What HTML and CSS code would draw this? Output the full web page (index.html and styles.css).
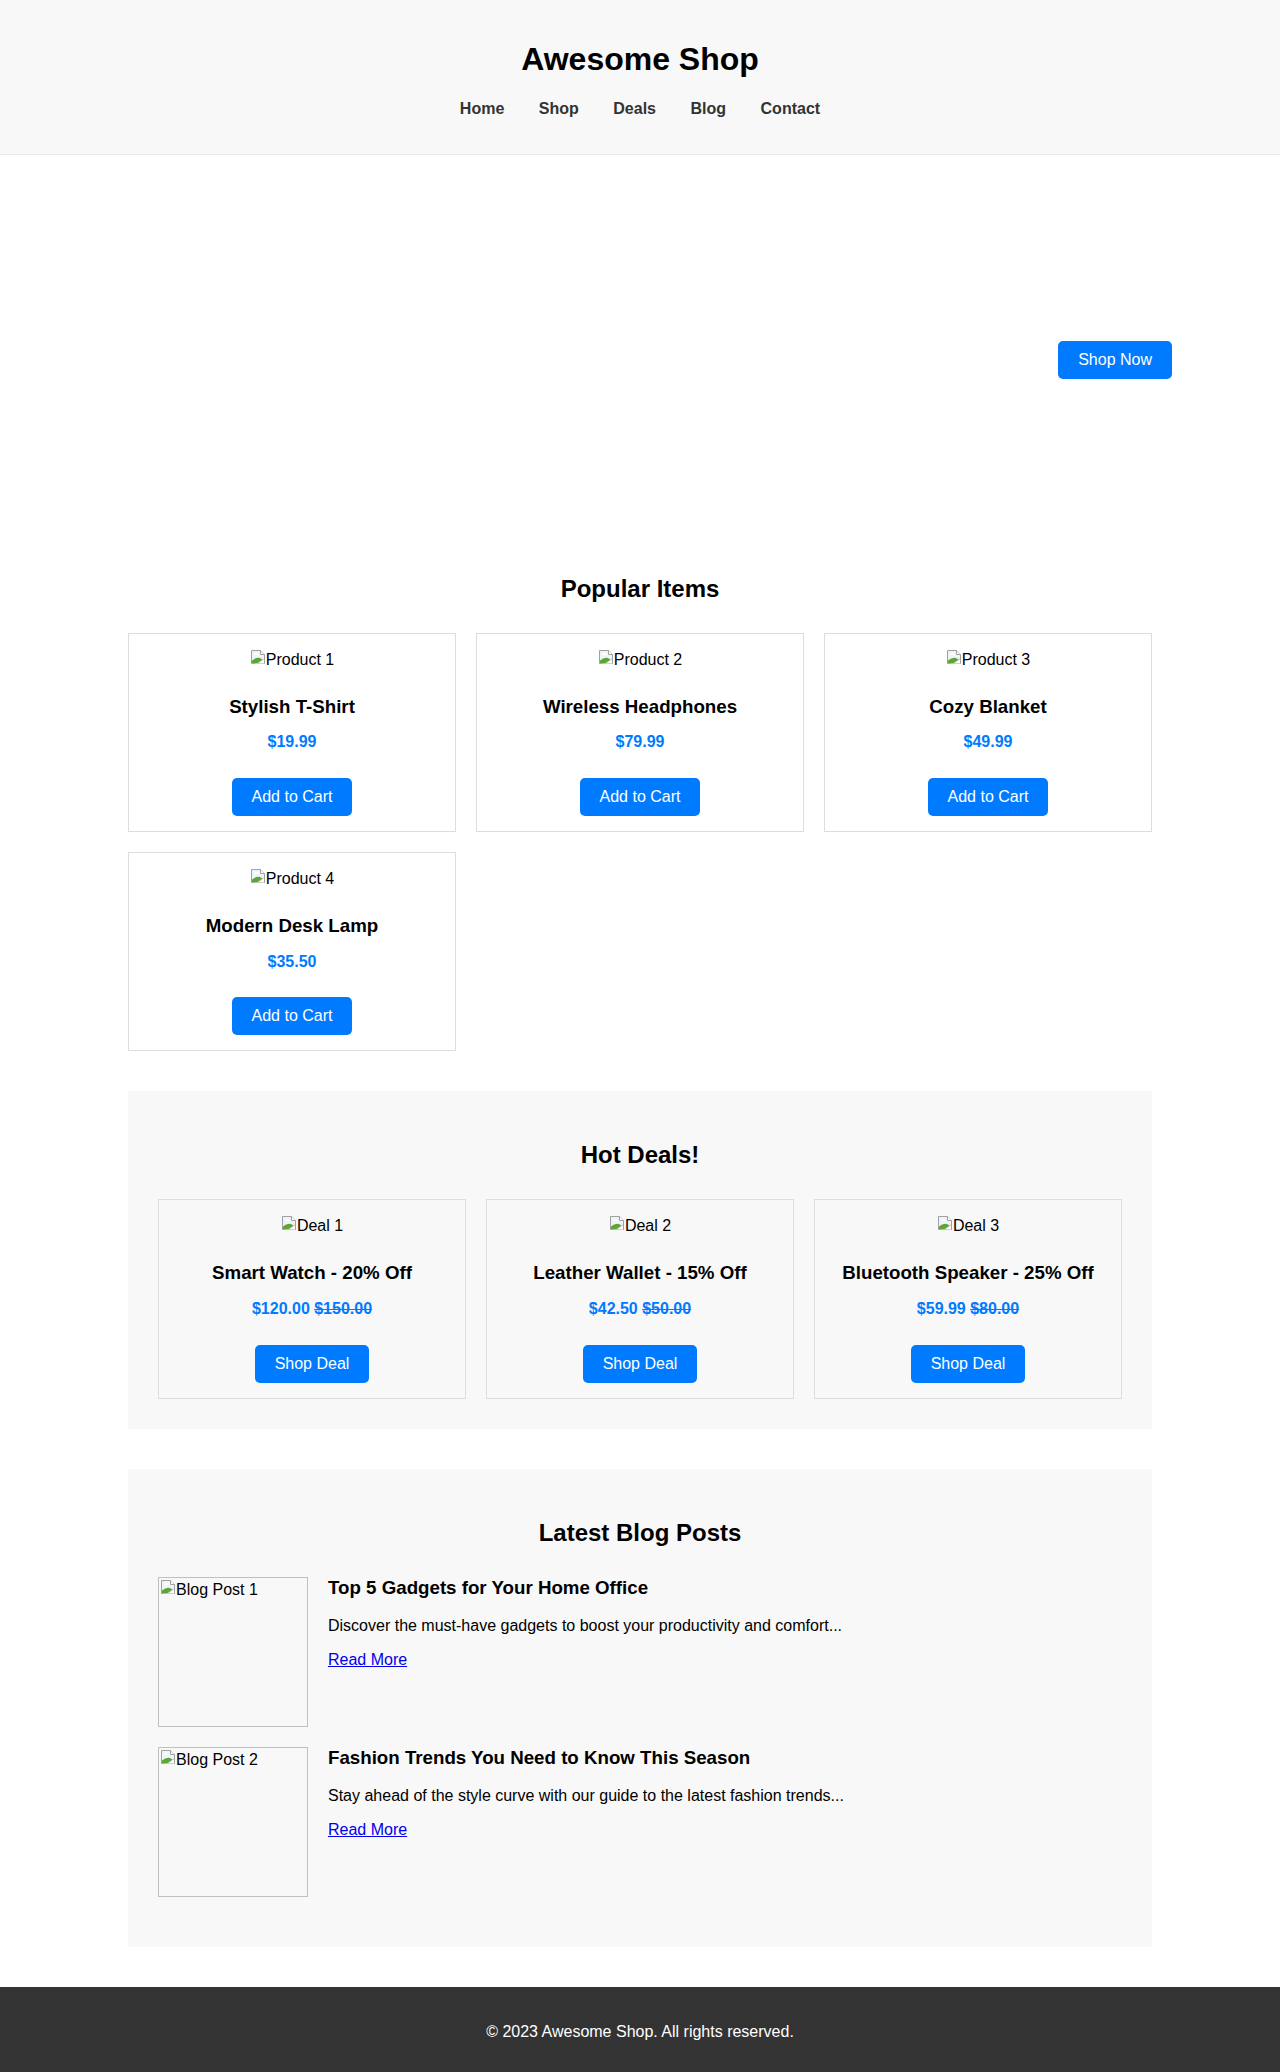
FILE: index.html
```html
<!doctype html>
<html>
<head>
<meta charset="UTF-8">
<title>Awesome Shop</title>
<meta name="viewport" content="width=device-width, initial-scale=1.0">
<link rel="stylesheet" href="styles.css">
</head>
<body>
<header class="site-header">
  <h1>Awesome Shop</h1>
  <nav>
    <ul class="nav">
      <li><a href="#">Home</a></li>
      <li><a href="#">Shop</a></li>
      <li><a href="#">Deals</a></li>
      <li><a href="#">Blog</a></li>
      <li><a href="#">Contact</a></li>
    </ul>
  </nav>
</header>

<section class="hero">
  <a href="#" class="btn">Shop Now</a>
</section>

<main class="container">
  <section class="popular">
    <h2>Popular Items</h2>
    <div class="grid">
      <div class="card">
        <div class="thumb"><svg class="broken" viewBox="0 0 16 16"><use href="#broken"/></svg>Product 1</div>
        <h3>Stylish T-Shirt</h3>
        <p class="price">$19.99</p>
        <a href="#" class="btn">Add to Cart</a>
      </div>
      <div class="card">
        <div class="thumb"><svg class="broken" viewBox="0 0 16 16"><use href="#broken"/></svg>Product 2</div>
        <h3>Wireless Headphones</h3>
        <p class="price">$79.99</p>
        <a href="#" class="btn">Add to Cart</a>
      </div>
      <div class="card">
        <div class="thumb"><svg class="broken" viewBox="0 0 16 16"><use href="#broken"/></svg>Product 3</div>
        <h3>Cozy Blanket</h3>
        <p class="price">$49.99</p>
        <a href="#" class="btn">Add to Cart</a>
      </div>
      <div class="card">
        <div class="thumb"><svg class="broken" viewBox="0 0 16 16"><use href="#broken"/></svg>Product 4</div>
        <h3>Modern Desk Lamp</h3>
        <p class="price">$35.50</p>
        <a href="#" class="btn">Add to Cart</a>
      </div>
    </div>
  </section>

  <section class="panel deals">
    <h2>Hot Deals!</h2>
    <div class="grid">
      <div class="card">
        <div class="thumb"><svg class="broken" viewBox="0 0 16 16"><use href="#broken"/></svg>Deal 1</div>
        <h3>Smart Watch - 20% Off</h3>
        <p class="price">$120.00 <del>$150.00</del></p>
        <a href="#" class="btn">Shop Deal</a>
      </div>
      <div class="card">
        <div class="thumb"><svg class="broken" viewBox="0 0 16 16"><use href="#broken"/></svg>Deal 2</div>
        <h3>Leather Wallet - 15% Off</h3>
        <p class="price">$42.50 <del>$50.00</del></p>
        <a href="#" class="btn">Shop Deal</a>
      </div>
      <div class="card">
        <div class="thumb"><svg class="broken" viewBox="0 0 16 16"><use href="#broken"/></svg>Deal 3</div>
        <h3>Bluetooth Speaker - 25% Off</h3>
        <p class="price">$59.99 <del>$80.00</del></p>
        <a href="#" class="btn">Shop Deal</a>
      </div>
    </div>
  </section>

  <section class="panel blog">
    <h2>Latest Blog Posts</h2>
    <article class="post">
      <div class="post-img"><svg class="broken" viewBox="0 0 16 16"><use href="#broken"/></svg>Blog Post 1</div>
      <div class="post-body">
        <h3>Top 5 Gadgets for Your Home Office</h3>
        <p>Discover the must-have gadgets to boost your productivity and comfort...</p>
        <a href="#">Read More</a>
      </div>
    </article>
    <article class="post">
      <div class="post-img"><svg class="broken" viewBox="0 0 16 16"><use href="#broken"/></svg>Blog Post 2</div>
      <div class="post-body">
        <h3>Fashion Trends You Need to Know This Season</h3>
        <p>Stay ahead of the style curve with our guide to the latest fashion trends...</p>
        <a href="#">Read More</a>
      </div>
    </article>
  </section>
</main>

<footer class="site-footer">
  <p>&copy; 2023 Awesome Shop. All rights reserved.</p>
</footer>

<!-- broken image glyph -->
<svg width="0" height="0" style="position:absolute">
  <symbol id="broken" viewBox="0 0 16 16">
    <path d="M1.5 1.5h9l4 4v9h-13z" fill="#eef4fa" stroke="#a0a0a0"/>
    <path d="M10.5 1.5v4h4" fill="#fff" stroke="#a0a0a0"/>
    <path d="M5 4.5q1.5-1.5 3 0q1.5 0 1 1.5h-4.5q-1 -1 .5-1.5z" fill="#fff"/>
    <path d="M2 14V11.5Q6 8 10 9L13.5 11.2 8 14Z" fill="#5aa832"/>
    <path d="M2 14.5 8 14 14 9.6V14.5Z" fill="#fff"/>
    <path d="M7.6 14.4 14 9.8" stroke="#b8b8b8" stroke-width="0.8"/>
  </symbol>
</svg>
</body>
</html>
```

FILE: styles.css
```css
body { margin: 0; font-family: "Liberation Sans", Arial, sans-serif; color: #000; background: #fff; }

.site-header { background: #f8f8f8; padding: 20px; text-align: center; border-bottom: 1px solid #eaeaea; }
.site-header h1 { font-size: 32px; margin: 21.44px 0; }
.nav { list-style: none; margin: 16px 0; padding: 0; display: flex; justify-content: center; gap: 34.5px; }
.nav a { color: #333; text-decoration: none; font-weight: bold; font-size: 16px; }

.hero { height: 400px; box-sizing: border-box; padding: 10px 108px 0; display: flex; align-items: center; justify-content: flex-end; }

.btn { display: inline-block; background: #007bff; color: #fff; text-decoration: none; font-size: 16px; padding: 10px 20px; border-radius: 5px; }

.container { width: 80%; margin: 0 auto; }
.container h2 { font-size: 24px; text-align: center; margin: 20px 0 30px; }

.popular { margin-bottom: 40px; }
.grid { display: grid; grid-template-columns: repeat(3, 1fr); gap: 20px; }
.card { border: 1px solid #ddd; padding: 15px; text-align: center; }
.card h3 { font-size: 18.72px; margin: 0 0 15.5px; }
.thumb { font-size: 16px; line-height: 16px; height: 18px; margin-bottom: 29px; }
.broken { width: 16px; height: 16px; vertical-align: baseline; }
.price { color: #007bff; font-weight: bold; margin: 0 0 26.8px; }
.price del { color: #007bff; }

.panel { background: #f8f8f8; padding: 30px; margin-bottom: 40px; }

.post { display: flex; gap: 20px; margin-bottom: 20px; }
.post-img { width: 150px; height: 150px; box-sizing: border-box; border: 1px solid #c0c0c0; padding: 1px; flex-shrink: 0; line-height: 16px; }
.post-body h3 { font-size: 18.72px; margin: 0 0 18.72px; }
.post-body p { margin: 0 0 16px; }
.post-body a { color: #0000ee; }

.site-footer { background: #333; color: #fff; text-align: center; padding: 20px; }
.site-footer p { margin: 16px 0; }
```
